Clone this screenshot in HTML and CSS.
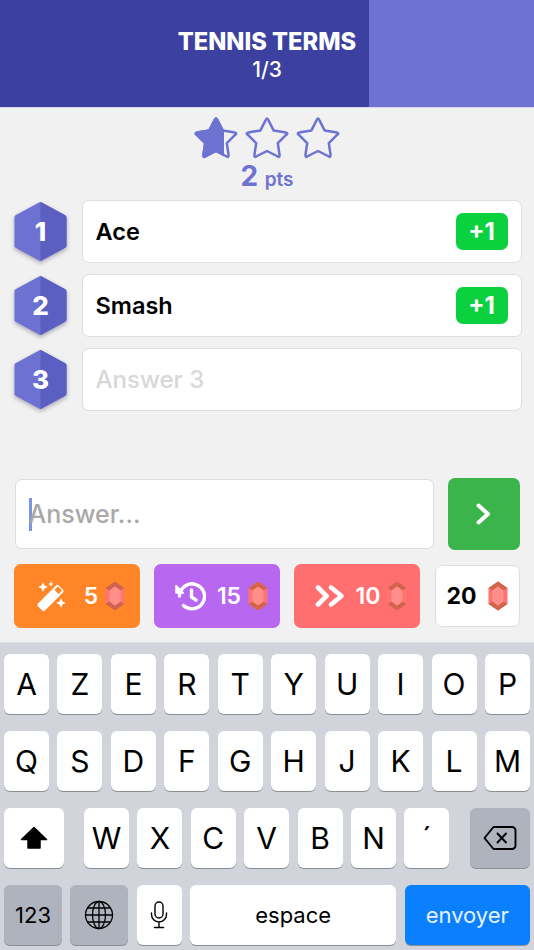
FILE: index.html
```html
<!DOCTYPE html>
<html lang="en">
<head>
<meta charset="utf-8">
<title>Tennis Terms</title>
<link rel="stylesheet" href="styles.css">
</head>
<body>
<svg class="defs" width="0" height="0" aria-hidden="true">
  <defs>
    <path id="star-shape" d="M21.400 6.600 Q23 2.500 24.600 6.600 L29.600 16.400 L40.550 18.200 Q45.500 19 41.550 21.300 L33.800 29.200 L35.470 40.140 Q36.200 44.500 32.900 42 L23 37 L13.100 42 Q9.800 44.500 10.530 40.140 L12.200 29.200 L4.450 21.300 Q0.500 19 5.450 18.200 L16.400 16.400 Z"/>
    <clipPath id="star-clip"><rect x="0" y="0" width="31" height="48"/></clipPath>
    <symbol id="gem" viewBox="0 0 20 30">
      <polygon points="10,0.5 19.5,7 19.5,23 10,29.5 0.5,23 0.5,7" fill="#ff7373"/>
      <polygon points="10,0.5 19.5,7 15.5,9.5 10,5.5 4.5,9.5 0.5,7" fill="#d2644c"/>
      <polygon points="10,29.5 19.5,23 15.5,20.5 10,24.5 4.5,20.5 0.5,23" fill="#d2644c"/>
      <polygon points="10,5.5 15.5,9.5 15.5,20.5 10,24.5 4.5,20.5 4.5,9.5" fill="#ff8f88"/>
    </symbol>
    <symbol id="hex" viewBox="0 0 53 60">
      <polygon points="26.5,2 50.5,15 50.5,44 26.5,57 2.5,44 2.5,15" fill="#6d71d2" stroke="#6d71d2" stroke-width="4" stroke-linejoin="round"/>
      <path d="M26.5 0 L50.500 13 Q52.500 14 52.500 16 V43 Q52.500 45 50.500 46 L26.5 59 Z" fill="#5b5fc1"/>
    </symbol>
  </defs>
</svg>

<header class="topbar">
  <h1 class="title">TENNIS TERMS</h1>
  <p class="counter">1/3</p>
</header>

<main class="game">
  <div class="stars">
    <svg class="star" viewBox="0 0 46 48"><use href="#star-shape" class="star-line"/><g clip-path="url(#star-clip)"><use href="#star-shape" class="star-fill"/></g></svg>
    <svg class="star" viewBox="0 0 46 48"><use href="#star-shape" class="star-line"/></svg>
    <svg class="star" viewBox="0 0 46 48"><use href="#star-shape" class="star-line"/></svg>
  </div>
  <p class="score"><span class="score-num">2</span> <span class="score-unit">pts</span></p>

  <ol class="answers">
    <li class="answer">
      <div class="hex"><svg class="hex-bg"><use href="#hex"/></svg><span class="hex-num">1</span></div>
      <div class="card"><span class="card-text">Ace</span><span class="plus">+1</span></div>
    </li>
    <li class="answer">
      <div class="hex"><svg class="hex-bg"><use href="#hex"/></svg><span class="hex-num">2</span></div>
      <div class="card"><span class="card-text">Smash</span><span class="plus">+1</span></div>
    </li>
    <li class="answer">
      <div class="hex"><svg class="hex-bg"><use href="#hex"/></svg><span class="hex-num">3</span></div>
      <div class="card"><span class="card-text card-empty">Answer 3</span></div>
    </li>
  </ol>

  <div class="entry">
    <div class="input"><span class="caret"></span><span class="placeholder">Answer...</span></div>
    <button class="send" type="button" aria-label="Send">
      <svg width="18" height="24" viewBox="0 0 18 24"><path d="M3.5 3.5 L13 12 L3.5 20.5" fill="none" stroke="#fff" stroke-width="4" stroke-linecap="round" stroke-linejoin="round"/></svg>
    </button>
  </div>

  <div class="powers">
    <div class="power power-orange">
      <svg class="power-icon" width="34" height="34" viewBox="0 0 34 34" fill="#fff">
        <path d="M22 6.500 a2 2 0 0 1 2.800 0 L29 10.700 a2 2 0 0 1 0 2.800 L11 31.500 a2 2 0 0 1 -2.800 0 L4 27.300 a2 2 0 0 1 0 -2.800 Z"/>
        <path d="M20.500 11 L24.500 15 L28 11.500 L24 7.500 Z" fill="#ff8526"/>
        <path d="M9 3 l1.500 3.500 L14 8 l-3.500 1.500 L9 13 l-1.500-3.500 L4 8 l3.500-1.500 Z"/>
        <path d="M17 2 l.8 2.200 2.200 .8 -2.200 .8 -.8 2.200 -.8-2.200 -2.200-.8 2.200-.8 Z"/>
        <path d="M27 19 l1.500 3.500 3.500 1.500 -3.500 1.500 -1.500 3.500 -1.500-3.500 -3.500-1.500 3.500-1.500 Z"/>
      </svg>
      <span class="power-num power-num-wide">5</span>
      <svg class="gem"><use href="#gem"/></svg>
    </div>
    <div class="power power-purple">
      <svg class="power-icon" width="32" height="32" viewBox="0 0 32 32" fill="none" stroke="#fff" stroke-width="3.400" stroke-linecap="round" stroke-linejoin="round">
        <path d="M5.500 16 A12.500 12.500 0 1 1 9.500 25.500"/>
        <path d="M2 5.500 V13 H9.500 Z" fill="#fff" stroke-width="1.500"/>
        <path d="M17.500 10 V17 L22 20"/>
      </svg>
      <span class="power-num">15</span>
      <svg class="gem"><use href="#gem"/></svg>
    </div>
    <div class="power power-red">
      <svg class="power-icon" width="30" height="24" viewBox="0 0 30 24" fill="none" stroke="#fff" stroke-width="4.600" stroke-linecap="round" stroke-linejoin="round">
        <path d="M3 3.500 L11.500 12 L3 20.500"/>
        <path d="M16 3.500 L26.500 12 L16 20.500"/>
      </svg>
      <span class="power-num">10</span>
      <svg class="gem"><use href="#gem"/></svg>
    </div>
    <div class="wallet">
      <span class="wallet-num">20</span>
      <svg class="gem"><use href="#gem"/></svg>
    </div>
  </div>
</main>

<section class="keyboard">
  <div class="key-row">
    <span class="key">A</span><span class="key">Z</span><span class="key">E</span><span class="key">R</span><span class="key">T</span><span class="key">Y</span><span class="key">U</span><span class="key">I</span><span class="key">O</span><span class="key">P</span>
  </div>
  <div class="key-row">
    <span class="key">Q</span><span class="key">S</span><span class="key">D</span><span class="key">F</span><span class="key">G</span><span class="key">H</span><span class="key">J</span><span class="key">K</span><span class="key">L</span><span class="key">M</span>
  </div>
  <div class="key-row-flex">
    <span class="key key-shift">
      <svg width="28" height="24" viewBox="0 0 28 24"><path d="M14 1.500 L26.500 13.500 H20 V22 H8 V13.500 H1.500 Z" fill="#000" stroke="#000" stroke-width="1.500" stroke-linejoin="round"/></svg>
    </span>
    <span class="key key-letter">W</span><span class="key key-letter">X</span><span class="key key-letter">C</span><span class="key key-letter">V</span><span class="key key-letter">B</span><span class="key key-letter">N</span><span class="key key-letter">´</span>
    <span class="key key-delete key-gray">
      <svg width="34" height="26" viewBox="0 0 34 26" fill="none" stroke="#000" stroke-width="1.900" stroke-linejoin="round" stroke-linecap="round">
        <path d="M10.500 2 H29 a3.500 3.500 0 0 1 3.500 3.500 V20.500 a3.500 3.500 0 0 1 -3.500 3.500 H10.500 L1.500 13 Z"/>
        <path d="M14.500 8.500 L23 17.500 M23 8.500 L14.500 17.500"/>
      </svg>
    </span>
  </div>
  <div class="key-row-flex">
    <span class="key key-num key-gray">123</span>
    <span class="key key-globe key-gray">
      <svg width="30" height="30" viewBox="0 0 30 30" fill="none" stroke="#000" stroke-width="1.300">
        <circle cx="15" cy="15" r="13.500"/>
        <ellipse cx="15" cy="15" rx="6.500" ry="13.500"/>
        <path d="M15 1.500 V28.500 M1.500 15 H28.500 M3.500 8 H26.500 M3.500 22 H26.500"/>
      </svg>
    </span>
    <span class="key key-letter">
      <svg width="18" height="28" viewBox="0 0 18 28" fill="none" stroke="#000" stroke-width="1.400" stroke-linecap="round">
        <rect x="5" y="1" width="8" height="16" rx="4"/>
        <path d="M1.500 12 V13.500 a7.500 7.500 0 0 0 15 0 V12 M9 21 V26.500 M4.500 26.500 H13.500"/>
      </svg>
    </span>
    <span class="key key-space">espace</span>
    <span class="key key-send">envoyer</span>
  </div>
</section>
</body>
</html>
```

FILE: styles.css
```css
* {
  box-sizing: border-box;
}

html, body {
  margin: 0;
  padding: 0;
}

body {
  width: 534px;
  height: 950px;
  overflow: hidden;
  background: #f1f1f1;
  font-family: Inter, "Liberation Sans", sans-serif;
}

.defs {
  display: block;
  height: 0;
}

/* Header */
.topbar {
  height: 108px;
  padding-top: 28px;
  border-bottom: 1px solid #d6d7f2;
  background: linear-gradient(to right, #3c40a0 369px, #6e73d2 369px);
  color: #fff;
  text-align: center;
}

.title {
  margin: 0;
  font-size: 23.700px;
  line-height: 28px;
  font-weight: 800;
}

.counter {
  margin: 2px 0 0;
  font-size: 21px;
  line-height: 24px;
  font-weight: 500;
}

/* Score */
.stars {
  display: flex;
  justify-content: center;
  gap: 5px;
  height: 48px;
  padding-top: 6px;
}

.star {
  width: 46px;
  height: 48px;
}

.star-line {
  fill: none;
  stroke: #6e73d2;
  stroke-width: 2.500;
  stroke-linejoin: round;
}

.star-fill {
  fill: #6e73d2;
  stroke: #6e73d2;
  stroke-width: 2.500;
  stroke-linejoin: round;
}

.score {
  margin: 3px 0 0;
  height: 41px;
  text-align: center;
  color: #6e73d2;
  line-height: 34px;
}

.score-num {
  font-size: 28px;
  font-weight: 700;
  margin-right: 2px;
}

.score-unit {
  font-size: 19px;
  font-weight: 600;
}

/* Answers */
.answers {
  list-style: none;
  margin: 0;
  padding: 0 12px 0 14px;
  display: flex;
  flex-direction: column;
  gap: 11px;
}

.answer {
  display: flex;
  align-items: center;
  gap: 15px;
  height: 63px;
}

.hex {
  display: flex;
  align-items: center;
  justify-content: center;
  position: relative;
  flex: none;
  width: 53px;
  height: 60px;
}

.hex-bg {
  position: absolute;
  inset: 0;
  width: 53px;
  height: 60px;
  filter: drop-shadow(0 2px 2px rgba(60, 60, 90, 0.4));
}

.hex-num {
  position: relative;
  color: #fff;
  font-size: 26px;
  font-weight: 800;
}

.card {
  flex: 1;
  height: 63px;
  display: flex;
  align-items: center;
  justify-content: space-between;
  padding: 0 13.500px 0 12.500px;
  background: #fff;
  border: 1.500px solid #dedede;
  border-radius: 7px;
}

.card-text {
  font-size: 23.500px;
  font-weight: 600;
  color: #000;
}

.card-empty {
  color: #d8d8d8;
  font-size: 24px;
  font-weight: 500;
}

.plus {
  width: 52px;
  height: 37px;
  display: flex;
  align-items: center;
  justify-content: center;
  border-radius: 7px;
  background: #0bd13e;
  color: #fff;
  font-size: 24px;
  font-weight: 700;
}

/* Input */
.entry {
  display: flex;
  align-items: center;
  gap: 14px;
  margin-top: 67px;
  padding-left: 15px;
}

.input {
  width: 419px;
  height: 70px;
  display: flex;
  align-items: center;
  padding-left: 12.500px;
  background: #fff;
  border: 1.500px solid #dcdcdc;
  border-radius: 7px;
}

.caret {
  width: 3px;
  height: 33px;
  margin-right: -3px;
  background: #7d94e4;
}

.placeholder {
  color: #a9a9a9;
  font-size: 25px;
  font-weight: 500;
}

.send {
  width: 72px;
  height: 72px;
  padding: 0;
  border: 0;
  border-radius: 7px;
  background: #3bb54b;
  display: flex;
  align-items: center;
  justify-content: center;
}

/* Power-ups */
.powers {
  display: flex;
  align-items: center;
  gap: 14px;
  margin-top: 14px;
  padding-left: 14px;
}

.power {
  width: 126px;
  height: 64px;
  display: flex;
  align-items: center;
  justify-content: center;
  padding-left: 8px;
  border-radius: 7px;
  color: #fff;
}

.power-orange {
  background: #ff8526;
  padding-left: 5px;
}

.power-purple {
  background: #b867f0;
}

.power-red {
  background: #ff6f6f;
}

.power-icon {
  margin-right: 11px;
  flex: none;
}

.power-num {
  font-size: 23px;
  font-weight: 600;
  margin-right: 7px;
}

.power-num-wide {
  margin-left: 5px;
}

.gem {
  flex: none;
  width: 20px;
  height: 30px;
}

.wallet {
  width: 85px;
  height: 62px;
  margin-left: 1px;
  display: flex;
  align-items: center;
  justify-content: center;
  gap: 11px;
  padding-right: 1px;
  background: #fff;
  border: 1.500px solid #dedede;
  border-radius: 7px;
}

.wallet-num {
  font-size: 23px;
  font-weight: 700;
  color: #000;
}

/* Keyboard */
.keyboard {
  margin-top: 14px;
  height: 308px;
  padding: 11px 4px 0;
  background: #d1d4db;
  border-top: 1px solid #dfe1e6;
  display: flex;
  flex-direction: column;
  gap: 17px;
}

.key-row {
  display: grid;
  grid-template-columns: repeat(10, 1fr);
  gap: 8.400px;
}

.key-row-flex {
  display: flex;
  gap: 8.400px;
}

.key {
  height: 60px;
  display: flex;
  align-items: center;
  justify-content: center;
  background: #fff;
  border-radius: 6px;
  box-shadow: 0 1px 0 #8a8d93;
  color: #000;
  font-size: 30px;
  font-weight: 400;
}

.key-letter {
  flex: none;
  width: 45px;
}

.key-shift {
  flex: none;
  width: 60px;
  margin-right: 11.600px;
}

.key-delete {
  flex: none;
  width: 60px;
  margin-left: 12.200px;
}

.key-gray {
  background: #aeb3be;
}

.key-num {
  flex: none;
  width: 58px;
  font-size: 22px;
}

.key-globe {
  flex: none;
  width: 58px;
}

.key-space {
  flex: 1;
  font-size: 22px;
}

.key-send {
  flex: none;
  width: 125.500px;
  background: #0a80fe;
  color: #e6f1ff;
  font-size: 22px;
}
```
